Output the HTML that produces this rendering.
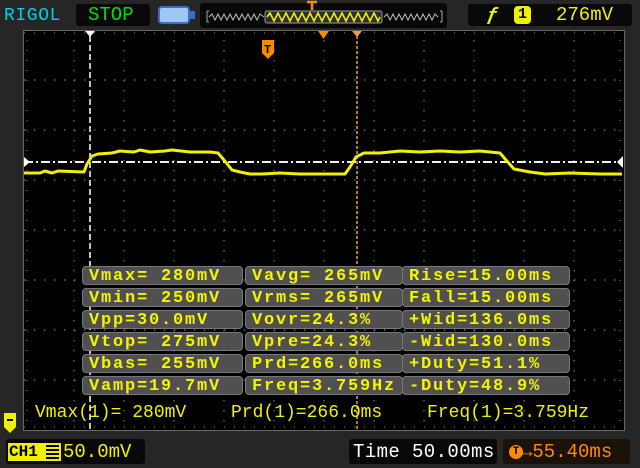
<!DOCTYPE html>
<html><head><meta charset="utf-8"><style>
html,body{margin:0;padding:0}
body{width:640px;height:468px;background:#262626;position:relative;overflow:hidden;font-family:"Liberation Mono",monospace;font-weight:bold}
.abs{position:absolute}
.box{position:absolute;background:#080808;border-radius:3px}
.t{position:absolute;white-space:pre;line-height:1}
.row{position:absolute;left:82px;width:488px;height:19px;}
.cell{position:absolute;top:0;height:19px;background:#505050;border:1px solid #777;border-radius:4px;box-sizing:border-box;color:#f4f400;font-size:17px;line-height:19px;padding-left:6px;white-space:pre;letter-spacing:1.8px}
</style></head><body>
<div class="t" style="left:4px;top:7px;color:#00d0e8;font-size:18px;font-weight:normal;letter-spacing:0.6px">RIGOL</div>
<div class="box" style="left:76px;top:4px;width:74px;height:22px"></div>
<div class="t" style="left:88px;top:6px;color:#00e000;font-size:19px;font-weight:normal">STOP</div>
<svg class="abs" style="left:157px;top:4px" width="40" height="22"><rect x="2" y="3" width="30" height="16" rx="3" fill="#9fc6f5" stroke="#3a70c0" stroke-width="2"/><rect x="32" y="7" width="6" height="8" fill="#3a70c0"/></svg>
<div class="box" style="left:200px;top:3px;width:247px;height:25px"></div>
<svg class="abs" style="left:200px;top:0" width="250" height="30">
<path d="M7 11v11M7 11h2M7 22h2" stroke="#aaa" fill="none"/>
<polyline points="9,17 12,14 15,20 18,14 21,20 24,14 27,20 30,14 33,20 36,14 39,20 42,14 45,20 48,14 51,20 54,14 57,20 60,14 64,17" stroke="#bbb" fill="none"/>
<rect x="65" y="11" width="117" height="12" rx="2" fill="#2e2e2e" stroke="#999"/>
<polyline points="67,17 70,13 74,21 78,13 82,21 86,13 90,21 94,13 98,21 102,13 106,21 110,13 114,21 118,13 122,21 126,13 130,21 134,13 138,21 142,13 146,21 150,13 154,21 158,13 162,21 166,13 170,21 174,13 178,21 180,17" stroke="#f0f000" stroke-width="1.6" fill="none"/>
<polyline points="184,17 187,14 190,20 193,14 196,20 199,14 202,20 205,14 208,20 211,14 214,20 217,14 220,20 223,14 226,20 229,14 232,20 235,14 238,17" stroke="#bbb" fill="none"/>
<path d="M242 11v11M240 11h2M240 22h2" stroke="#aaa" fill="none"/>
<path d="M107 2h10M112 2v8" stroke="#ff8a00" stroke-width="2.5"/>
</svg>
<div class="box" style="left:468px;top:4px;width:164px;height:22px"></div>
<div class="t" style="left:487px;top:6px;color:#f0f000;font-size:19px;font-style:italic">ƒ</div>
<div class="abs" style="left:514px;top:6px;width:17px;height:18px;background:#f0f000;border-radius:4px;color:#000;font-size:15px;text-align:center;line-height:18px">1</div>
<div class="t" style="left:556px;top:6px;color:#f0f000;font-size:19px;font-weight:normal">276mV</div>

<div class="abs" style="left:23px;top:30px;width:602px;height:401px;background:#000;border:1px solid #666;box-sizing:border-box"></div>
<svg class="abs" style="left:0;top:0" width="640" height="468">
<g stroke="#6a6a6a" stroke-width="1.4" stroke-dasharray="1.4 8.6">
<path d="M24 80H623M24 130H623M24 180H623M24 230H623M24 280H623M24 330H623M24 380H623"/>
<path d="M74 30V430M124 30V430M174 30V430M224 30V430M274 30V430M324 30V430M374 30V430M424 30V430M474 30V430M524 30V430M574 30V430"/>
</g>
<g stroke="#888" stroke-width="1" stroke-dasharray="1 9">
<path d="M24 33H623M24 427H623M27 30V430M620 30V430"/>
</g>
<path d="M24 162H622" stroke="#eee" stroke-width="2" stroke-dasharray="9 3 2 3"/>
<path d="M24 157l6 5-6 5z" fill="#fff"/>
<path d="M623 156l-6 6 6 6z" fill="#fff"/>
<path d="M90 36V430" stroke="#fff" stroke-width="1.5" stroke-dasharray="6 3"/>
<path d="M85 31h10l-5 6z" fill="#fff"/>
<path d="M357 36V430" stroke="#e8a040" stroke-width="1.5" stroke-dasharray="3 2"/>
<path d="M352 31h10l-5 6z" fill="#e8a040"/>
<path d="M318 31h11l-5.5 8z" fill="#ff8a00"/>
<path d="M262 40h12v13l-6 6-6-6z" fill="#ff8a00"/>
<text x="264" y="53" font-family="Liberation Mono" font-weight="bold" font-size="12" fill="#000">T</text>
<polyline fill="none" stroke="#f0f000" stroke-width="3" stroke-linejoin="round" points="24,173 40,173 45,171 52,173 58,171 84,172 87,164 92,156 98,154 112,153 120,151 134,152 140,150 150,152 165,151 172,150 190,152 210,152 218,153 224,160 232,170 240,172 250,174 262,174 280,173 300,174 345,174 350,167 356,157 364,153 380,153 400,151 420,152 440,151 460,152 480,151 500,153 506,160 514,169 530,172 545,174 570,173 600,174 622,174"/>
<path d="M4 413h12v14l-6 6-6-6z" fill="#f0f000"/>
<path d="M7 420h6" stroke="#000" stroke-width="2"/>
</svg>

<div class="row" style="top:266px"><div class="cell" style="left:0;width:161px">Vmax= 280mV</div><div class="cell" style="left:163px;width:158px">Vavg= 265mV</div><div class="cell" style="left:320px;width:168px">Rise=15.00ms</div></div>
<div class="row" style="top:288px"><div class="cell" style="left:0;width:161px">Vmin= 250mV</div><div class="cell" style="left:163px;width:158px">Vrms= 265mV</div><div class="cell" style="left:320px;width:168px">Fall=15.00ms</div></div>
<div class="row" style="top:310px"><div class="cell" style="left:0;width:161px">Vpp=30.0mV</div><div class="cell" style="left:163px;width:158px">Vovr=24.3%</div><div class="cell" style="left:320px;width:168px">+Wid=136.0ms</div></div>
<div class="row" style="top:332px"><div class="cell" style="left:0;width:161px">Vtop= 275mV</div><div class="cell" style="left:163px;width:158px">Vpre=24.3%</div><div class="cell" style="left:320px;width:168px">-Wid=130.0ms</div></div>
<div class="row" style="top:354px"><div class="cell" style="left:0;width:161px">Vbas= 255mV</div><div class="cell" style="left:163px;width:158px">Prd=266.0ms</div><div class="cell" style="left:320px;width:168px">+Duty=51.1%</div></div>
<div class="row" style="top:376px"><div class="cell" style="left:0;width:161px">Vamp=19.7mV</div><div class="cell" style="left:163px;width:158px">Freq=3.759Hz</div><div class="cell" style="left:320px;width:168px">-Duty=48.9%</div></div>

<div class="t" style="left:35px;top:404px;color:#f0f000;font-size:18px;font-weight:normal">Vmax(1)= 280mV</div>
<div class="t" style="left:231px;top:404px;color:#f0f000;font-size:18px;font-weight:normal">Prd(1)=266.0ms</div>
<div class="t" style="left:427px;top:404px;color:#f0f000;font-size:18px;font-weight:normal">Freq(1)=3.759Hz</div>

<div class="box" style="left:6px;top:439px;width:139px;height:25px"></div>
<div class="abs" style="left:8px;top:443px;width:53px;height:18px;background:#f0f000;color:#000;font-size:16px;line-height:18px;padding-left:1px;box-sizing:border-box">CH1</div>
<div class="abs" style="left:46px;top:445px;width:13px;height:14px;background:repeating-linear-gradient(#000 0 2px,#f0f000 2px 4px)"></div>
<div class="t" style="left:63px;top:443px;color:#f0f000;font-size:19px;font-weight:normal">50.0mV</div>
<div class="box" style="left:349px;top:439px;width:148px;height:25px"></div>
<div class="t" style="left:353px;top:443px;color:#fff;font-size:19px;font-weight:normal;letter-spacing:0.4px">Time 50.00ms</div>
<div class="box" style="left:503px;top:439px;width:127px;height:25px;background:#1a1208"></div>
<div class="abs" style="left:509px;top:445px;width:14px;height:14px;border-radius:50%;background:#ff8a00;color:#000;font-size:11px;line-height:14px;text-align:center">T</div>
<div class="t" style="left:521px;top:443px;color:#ff8a00;font-size:19px;font-weight:normal">→55.40ms</div>
</body></html>
